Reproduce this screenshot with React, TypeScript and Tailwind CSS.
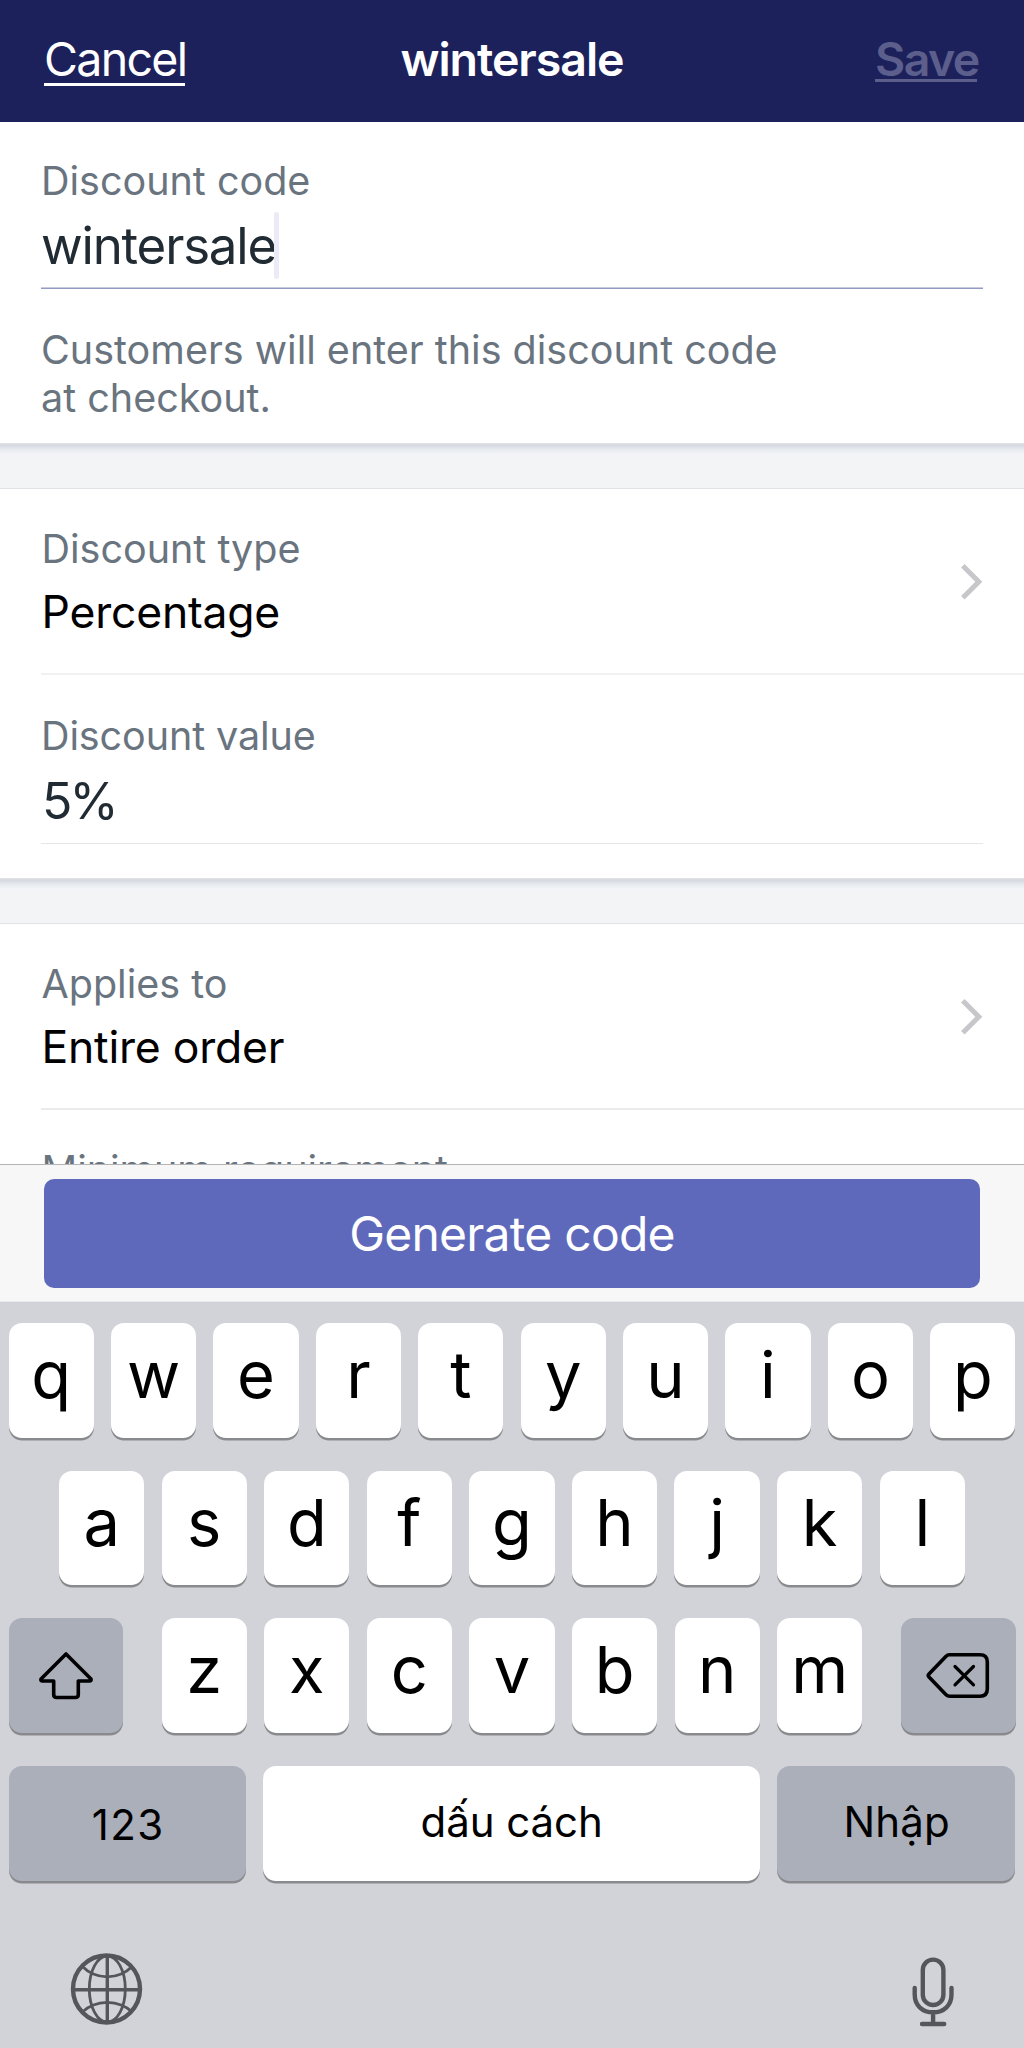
import type { ReactNode } from 'react'

const shadowStrip =
  'bg-[linear-gradient(to_bottom,#e4e5e8_0px,#d5d8df_2px,#dde0e6_4px,#e9ecf0_7px,#f2f4f7_11px,#f3f4f6_15px)] border-b border-[#e1e2e5]'

function Label({ children }: { children: ReactNode }) {
  return <div className="text-[39.5px] leading-[48px] text-[#69747f]">{children}</div>
}

function Chevron() {
  return (
    <svg width="22" height="38" viewBox="0 0 22 38" fill="none" stroke="#c7c7cb" strokeWidth="5">
      <path d="M1.8 2.8 L17.8 18.8 L1.8 34.8" />
    </svg>
  )
}

function SelectRow({ label, value }: { label: string; value: string }) {
  return (
    <div className="flex h-[184px] justify-between pt-9 pr-[41px] pl-[41.5px]">
      <div>
        <Label>{label}</Label>
        <div className="mt-[11px] text-[44.5px] leading-[56px] tracking-[-0.22px] text-black">{value}</div>
      </div>
      <div className="pt-[38px]">
        <Chevron />
      </div>
    </div>
  )
}

function Letter({ children }: { children: string }) {
  return (
    <div className="h-[114.7px] w-[85.3px] rounded-[13px] bg-white text-center text-[65px] leading-[103px] font-[380] text-black shadow-[0_2.5px_0_#898a8d]">
      {children}
    </div>
  )
}

function DarkKey({ className, children }: { className: string; children: ReactNode }) {
  return (
    <div className={`flex h-[114.7px] justify-center rounded-[13px] bg-[#abafba] text-black shadow-[0_2.5px_0_#898a8d] ${className}`}>
      {children}
    </div>
  )
}

export default function App() {
  return (
    <div className="flex h-[2048px] w-[1024px] flex-col overflow-hidden bg-white font-[Inter,sans-serif]">
      <header className="grid h-[122px] shrink-0 grid-cols-[356.5px_1fr_102px] items-start bg-[#1d215b] pl-11 pr-[47px] text-[46.5px] leading-[118px] text-white">
        <div className="flex w-[142px] flex-col">
          <span className="h-[83px] tracking-[-1.71px] whitespace-nowrap">Cancel</span>
          <span className="h-[3px] w-[141px] bg-white" />
        </div>
        <div className="font-semibold tracking-[-1.05px] whitespace-nowrap">wintersale</div>
        <div className="flex w-[102px] flex-col text-[#5c5e8b]">
          <span className="h-[79px] font-semibold tracking-[-1.6px] whitespace-nowrap">Save</span>
          <span className="h-[3px] w-[102px] bg-[#5c5e8b]" />
        </div>
      </header>

      <main className="h-[1042px] shrink-0 overflow-hidden">
        <section className="h-[321px] px-[41px] pt-[35px]">
          <Label>Discount code</Label>
          <div className="mt-[7px] flex h-[75px]">
            <span className="w-[233px] pt-[2px] text-[51px] leading-[64px] tracking-[-1.2px] whitespace-nowrap text-[#212b33]">wintersale</span>
            <span className="h-[67px] w-[5px] rounded-sm bg-[#ebebf7]" />
          </div>
          <div className="h-[2px] border-t border-b border-t-[#c9cbdf] border-b-[#9499c2]" />
          <p className="mt-[37px] w-[800px] text-[39.5px] leading-[48px] text-[#69747f]">
            Customers will enter this discount code
            <br />
            at checkout.
          </p>
        </section>
        <div className={`${shadowStrip} h-[46px]`} />
        <section className="h-[389px]">
          <SelectRow label="Discount type" value="Percentage" />
          <div className="ml-[41px] h-[2px] bg-[#f1f1f2]" />
          <div className="mr-[41px] ml-[41px] h-[169px] border-b border-[#e4e5e7] pt-[37px]">
            <Label>
              <span className="tracking-[-0.1px]">Discount value</span>
            </Label>
            <div className="mt-[9px] pl-px text-[50px] leading-[64px] tracking-[-2.9px] text-[#212b33]">5%</div>
          </div>
        </section>
        <div className={`${shadowStrip} h-[46px]`} />
        <section>
          <SelectRow label="Applies to" value="Entire order" />
          <div className="ml-[41px] h-[2px] bg-[#ebebed]" />
          <div className="px-[41.5px] pt-[36px]">
            <Label>
              <span className="tracking-[-0.05px]">Minimum requirement</span>
            </Label>
          </div>
        </section>
      </main>

      <div className="h-[138px] shrink-0 border-t border-b border-t-[#b4b4b7] border-b-[#e9eaed] bg-[#f7f7f7] px-11 pt-[14px]">
        <button className="block h-[109px] w-full rounded-[10px] bg-[#5f69bc] text-center text-[48px] leading-[108px] tracking-[-0.75px] text-white">
          Generate code
        </button>
      </div>

      <div className="flex flex-1 flex-col gap-[32.9px] bg-[#d2d3d8] pt-[21.2px]">
        <div className="flex justify-between pr-[8.5px] pl-[8.5px]">
          {'qwertyuiop'.split('').map((c) => (
            <Letter key={c}>{c}</Letter>
          ))}
        </div>
        <div className="flex justify-between px-[59px]">
          {'asdfghjkl'.split('').map((c) => (
            <Letter key={c}>{c}</Letter>
          ))}
        </div>
        <div className="flex justify-between pr-[8.5px] pl-[8.5px]">
          <DarkKey className="w-[114.5px]">
            <svg className="mt-[33px] ml-[1px]" width="56" height="50" viewBox="0 0 56 50" fill="none" stroke="#000" strokeWidth="3.6" strokeLinejoin="round">
              <path d="M28 3 L53 28 Q53.5 30 52 30 H40.3 V43.5 Q40.3 46.5 37.3 46.5 H18.7 Q15.7 46.5 15.7 43.5 V30 H4 Q2.5 30 3 28 Z" />
            </svg>
          </DarkKey>
          <div className="flex w-[701px] justify-between">
            {'zxcvbnm'.split('').map((c) => (
              <Letter key={c}>{c}</Letter>
            ))}
          </div>
          <DarkKey className="w-[114.5px]">
            <svg className="mt-[34px]" width="64" height="48" viewBox="0 0 64 48" fill="none" stroke="#000" strokeWidth="3.6" strokeLinejoin="round" strokeLinecap="round">
              <path d="M23.5 2.8 H54 Q61.3 2.8 61.3 10 V37 Q61.3 44.2 54 44.2 H24 Q21.5 44.2 19.8 42.5 L3 25 Q1.6 23.5 3 22 L19.8 4.5 Q21.5 2.8 23.5 2.8 Z" />
              <path d="M29 14.5 L47.5 32.8 M47.5 14.5 L29 32.8" strokeWidth="3.2" />
            </svg>
          </DarkKey>
        </div>
        <div className="flex justify-between pr-[9px] pl-[8.5px]">
          <DarkKey className="w-[237.5px] text-[42px] leading-[117px] tracking-[1.5px]">
            <span className="pl-[2px]">123</span>
          </DarkKey>
          <div className="h-[114.7px] w-[497.2px] rounded-[13px] bg-white text-center text-[42px] leading-[111px] tracking-[-0.06px] text-black shadow-[0_2.5px_0_#898a8d]">
            dấu cách
          </div>
          <DarkKey className="w-[237.7px] text-[42px] leading-[111px] tracking-[0.15px]">
            <span className="pl-px">Nhập</span>
          </DarkKey>
        </div>
        <div className="flex justify-between pt-[39px] pr-[70.5px] pl-[70px]">
          <svg width="73" height="73" viewBox="0 0 73 73" fill="none" stroke="#54565c" strokeWidth="2.8">
            <circle cx="36.5" cy="36" r="33.5" strokeWidth="4.4" />
            <path d="M37.3 3 V69 M3 36.7 H70" strokeWidth="3.4" />
            <ellipse cx="37.3" cy="36" rx="18" ry="33" />
            <path d="M12.5 13.5 Q22 23.5 37.3 23.8 Q52.5 23.5 62 13.5 M12.5 59 Q22 49.5 37.3 49.3 Q52.5 49.5 62 59" />
          </svg>
          <svg className="mt-[4px]" width="42" height="70" viewBox="0 0 42 70" fill="none" stroke="#54565c" strokeWidth="4.4" strokeLinecap="round">
            <rect x="10.8" y="2.6" width="20.6" height="45.4" rx="10.3" />
            <path d="M2.7 31 V37.5 C2.7 48.5 10.5 55.3 21.1 55.3 C31.7 55.3 39.5 48.5 39.5 37.5 V31 M21.1 55.3 V67 M10 67 H32.2" />
          </svg>
        </div>
      </div>
    </div>
  )
}
